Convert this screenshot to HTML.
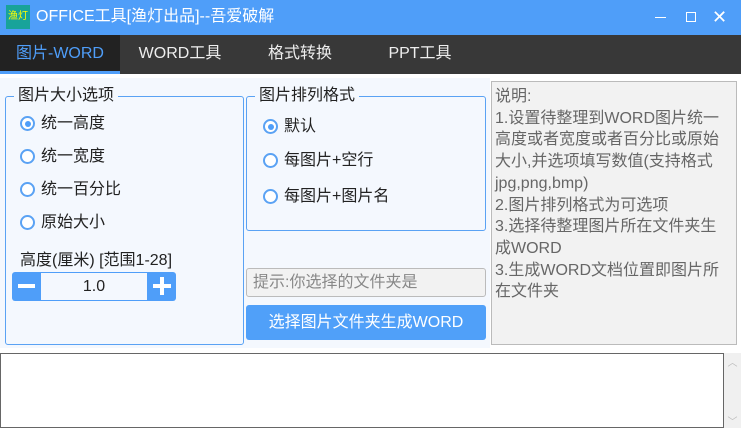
<!DOCTYPE html><html><head><meta charset="utf-8"><style>
*{margin:0;padding:0;box-sizing:border-box}
body{width:741px;height:428px;overflow:hidden;background:#fff;font-family:"Liberation Sans","Noto Sans CJK SC",sans-serif;position:relative;color:#222}
.a{position:absolute}
.title{left:0;top:0;width:741px;height:35px;background:#4f9ef9;color:#fff;font-size:16px}
.tabs{left:0;top:35px;width:741px;height:39px;background:#383838}
.tab{position:absolute;top:0;height:39px;line-height:37px;font-size:16px;color:#eee;text-align:center}
.grp{border:1px solid #5aa2f4;border-radius:3px;background:#f4f8fe}
.lg{position:absolute;top:-11px;background:#f4f8fe;padding:0 4px;font-size:16px;line-height:19px}
.r{position:absolute;font-size:16px;line-height:19px;white-space:nowrap}
.r i{position:absolute;left:-21px;top:2px;width:15px;height:15px;border:2px solid #5aa2f4;border-radius:50%;background:#fff}
.r i.on:after{content:"";position:absolute;left:2.5px;top:2.5px;width:6px;height:6px;border-radius:50%;background:#4f9ef9}
</style></head><body>
<div class="a title">
 <div class="a" style="left:6px;top:5px;width:24px;height:24px;background:#18a39a;color:#ff0;font-size:10px;line-height:24px;text-align:center">渔灯</div>
 <div class="a" style="left:36px;top:7px;line-height:20px">OFFICE工具[渔灯出品]--吾爱破解</div>
 <div class="a" style="left:655px;top:17px;width:11px;height:1px;background:#fff"></div>
 <div class="a" style="left:686px;top:12px;width:10px;height:10px;border:1px solid #fff"></div>
 <div class="a" style="left:712px;top:6px;font-size:18px;line-height:22px">✕</div>
</div>
<div class="a tabs">
 <div class="tab" style="left:0;width:120px;background:#222;color:#4f9ef9;border-bottom:3px solid #4f9ef9">图片-WORD</div>
 <div class="tab" style="left:120px;width:120px">WORD工具</div>
 <div class="tab" style="left:240px;width:120px">格式转换</div>
 <div class="tab" style="left:360px;width:120px">PPT工具</div>
</div>
<div class="a" style="left:0;top:78px;width:490px;height:270px;background:#f4f8fe"></div>
<div class="a grp" style="left:5px;top:96px;width:239px;height:249px">
 <div class="lg" style="left:8px">图片大小选项</div>
 <div class="r" style="left:35px;top:17px"><i class="on"></i>统一高度</div>
 <div class="r" style="left:35px;top:50px"><i></i>统一宽度</div>
 <div class="r" style="left:35px;top:83px"><i></i>统一百分比</div>
 <div class="r" style="left:35px;top:116px"><i></i>原始大小</div>
 <div class="r" style="left:14px;top:154px">高度(厘米) [范围1-28]</div>
 <div class="a" style="left:6px;top:175px;width:164px;height:29px;background:#4f9ef9;border-radius:3px">
  <div class="a" style="left:29px;top:1px;width:106px;height:27px;background:#f4f8fe;text-align:center;line-height:27px;font-size:16px">1.0</div>
  <div class="a" style="left:6px;top:12px;width:17px;height:4px;background:#fff"></div>
  <div class="a" style="left:141px;top:12px;width:18px;height:4px;background:#fff"></div>
  <div class="a" style="left:148px;top:5px;width:4px;height:18px;background:#fff"></div>
 </div>
</div>
<div class="a grp" style="left:246px;top:96px;width:240px;height:135px">
 <div class="lg" style="left:8px">图片排列格式</div>
 <div class="r" style="left:37px;top:20px"><i class="on"></i>默认</div>
 <div class="r" style="left:37px;top:54px"><i></i>每图片+空行</div>
 <div class="r" style="left:37px;top:90px"><i></i>每图片+图片名</div>
</div>
<div class="a" style="left:246px;top:268px;width:240px;height:29px;border:1px solid #bbb;border-radius:3px;background:#f2f2f2;color:#888;font-size:16px;line-height:27px;padding-left:6px">提示:你选择的文件夹是</div>
<div class="a" style="left:246px;top:305px;width:240px;height:35px;background:#50a0f9;border-radius:3px;color:#fff;font-size:16px;line-height:35px;text-align:center">选择图片文件夹生成WORD</div>
<div class="a" style="left:491px;top:81px;width:246px;height:264px;background:#f2f2f2;border:1px solid #bbb;color:#666;font-size:16px;line-height:21.7px;padding:4px 3px;white-space:nowrap;overflow:hidden">说明:<br>1.设置待整理到WORD图片统一<br>高度或者宽度或者百分比或原始<br>大小,并选项填写数值(支持格式<br>jpg,png,bmp)<br>2.图片排列格式为可选项<br>3.选择待整理图片所在文件夹生<br>成WORD<br>3.生成WORD文档位置即图片所<br>在文件夹</div>
<div class="a" style="left:0;top:353px;width:724px;height:75px;border:1px solid #666;background:#fff"></div>
<div class="a" style="left:724px;top:353px;width:17px;height:75px;background:#f0f0f0;color:#bbb;font-size:10px;text-align:center"><div style="margin-top:1px">︿</div><div style="margin-top:44px">﹀</div></div>
</body></html>
